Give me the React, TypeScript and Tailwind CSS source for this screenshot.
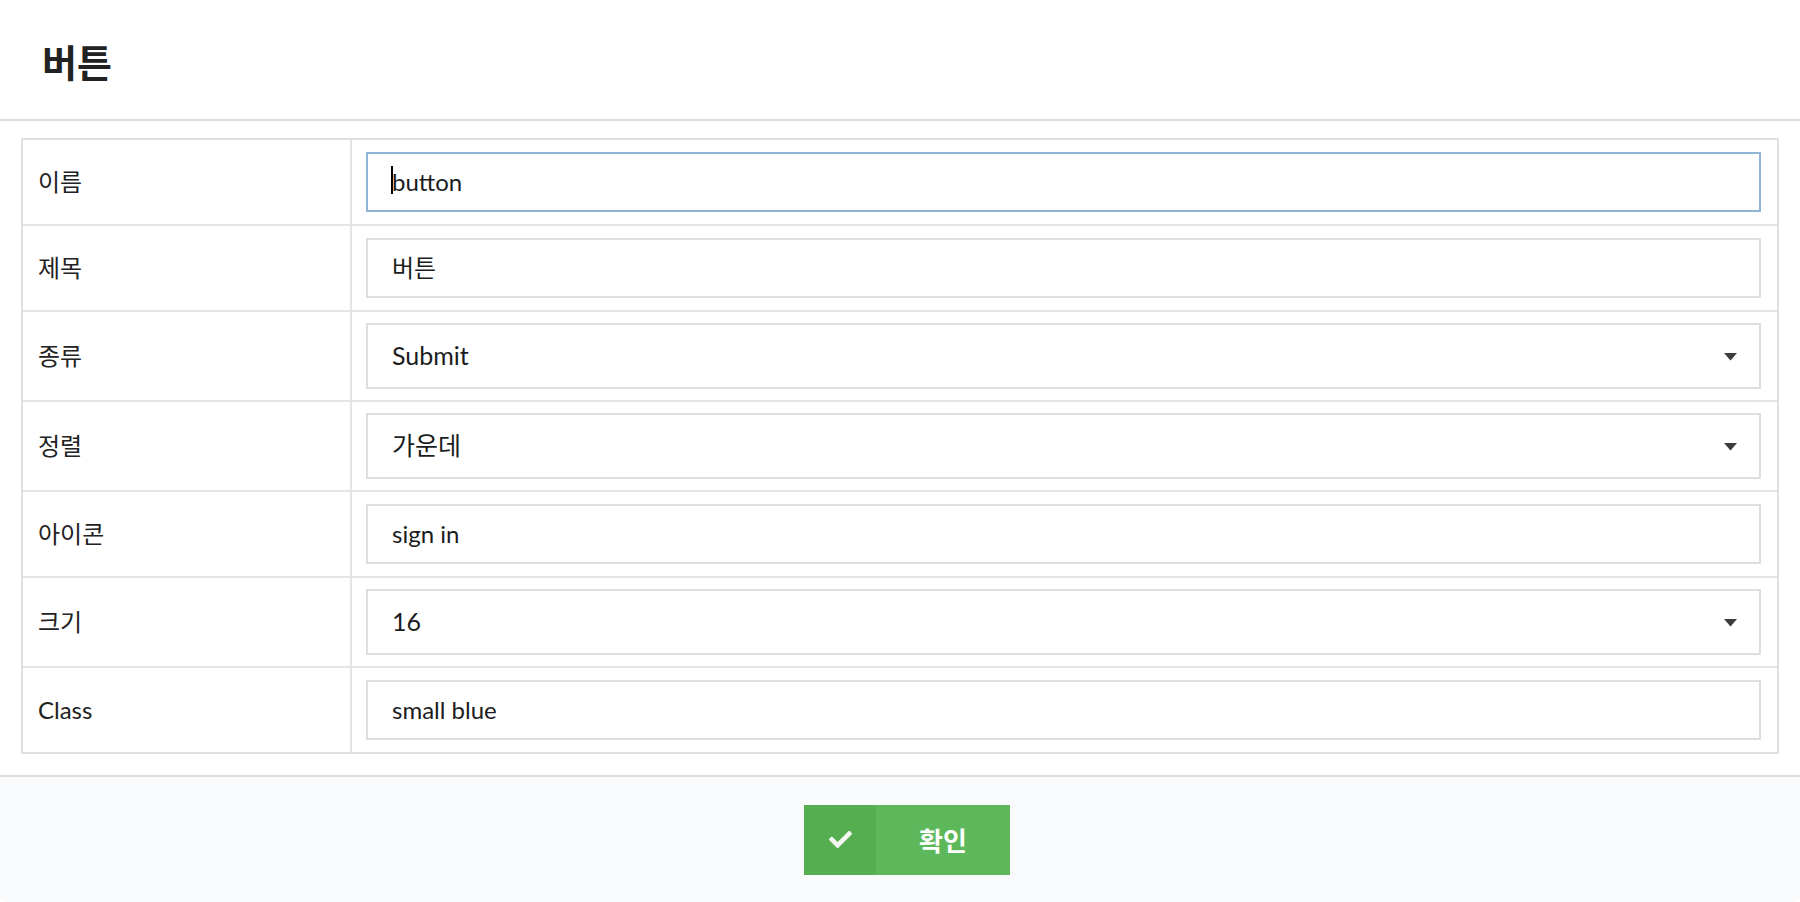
import React from "react";
import { FaCheck } from "react-icons/fa";

const FONT = { fontFamily: "Lato, 'Noto Sans CJK KR', 'Noto Sans', sans-serif" } as const;

type Row = { label: string; value: string; kind: "input" | "select"; focused?: boolean };

const rows: Row[] = [
  { label: "이름", value: "button", kind: "input", focused: true },
  { label: "제목", value: "버튼", kind: "input" },
  { label: "종류", value: "Submit", kind: "select" },
  { label: "정렬", value: "가운데", kind: "select" },
  { label: "아이콘", value: "sign in", kind: "input" },
  { label: "크기", value: "16", kind: "select" },
  { label: "Class", value: "small blue", kind: "input" },
];

function Field({ row }: { row: Row }) {
  if (row.kind === "select") {
    return (
      <div className="flex h-[66px] items-center justify-between border-2 border-[#dedede] bg-white pl-[24px] pr-[22px] text-[25px] text-[#1b1c1d]">
        <span>{row.value}</span>
        <svg width="13" height="8" viewBox="0 0 13 8" className="mt-[2px]">
          <path d="M0 0 L13 0 L6.5 7.5 Z" fill="#3d3d3d" />
        </svg>
      </div>
    );
  }
  return (
    <div
      className={
        "flex h-[60px] items-center bg-white pl-[24px] text-[24px] text-[#1b1c1d] border-2 " +
        (row.focused ? "border-[#90b4d6]" : "border-[#dedede]")
      }
    >
      {row.focused ? (
        <span className="relative">
          <span className="absolute left-[-1px] top-[2px] h-[28px] w-[2px] bg-black" />
          {row.value}
        </span>
      ) : (
        <span>{row.value}</span>
      )}
    </div>
  );
}

export default function App() {
  return (
    <div className="h-[902px] w-full bg-white" style={FONT}>
      <div className="flex h-[902px] flex-col overflow-hidden rounded-[6px] bg-white">
        <div className="flex h-[121px] shrink-0 items-center border-b-2 border-[#dcdcdc] pl-[42px]">
          <h1
            className="mt-[2px] text-[38px] font-bold leading-none text-[#222]"
            style={{ fontFamily: "'Noto Sans CJK KR', sans-serif" }}
          >
            버튼
          </h1>
        </div>
        <div className="flex-1 px-[21px] pt-[17px]">
          <div className="border-2 border-[#e0e0e0]">
            {rows.map((row, i) => (
              <div
                key={row.label}
                className={"flex " + (i < rows.length - 1 ? "border-b-2 border-[#e4e4e4]" : "")}
              >
                <div className="flex w-[329px] shrink-0 items-center border-r-2 border-[#e4e4e4] pl-[15px] text-[24px] text-[#222]">
                  {row.label}
                </div>
                <div
                  className={
                    "flex-1 pl-[14px] pr-[16px] " + (row.kind === "select" ? "py-[11px]" : "py-[12px]")
                  }
                >
                  <Field row={row} />
                </div>
              </div>
            ))}
          </div>
        </div>
        <div className="flex h-[127px] shrink-0 items-center justify-center border-t-2 border-[#dcdcdd] bg-[#f9fafb]">
          <button className="ml-[14px] flex h-[70px] w-[206px] items-stretch text-white">
            <span className="flex w-[72px] items-center justify-center bg-[#55ae50]">
              <FaCheck className="text-[#f3f7f2]" size={23} />
            </span>
            <span
              className="flex flex-1 items-center justify-center bg-[#5cb85a] text-[26px] font-bold"
              style={{ fontFamily: "'Noto Sans CJK KR', sans-serif" }}
            >
              확인
            </span>
          </button>
        </div>
      </div>
    </div>
  );
}
